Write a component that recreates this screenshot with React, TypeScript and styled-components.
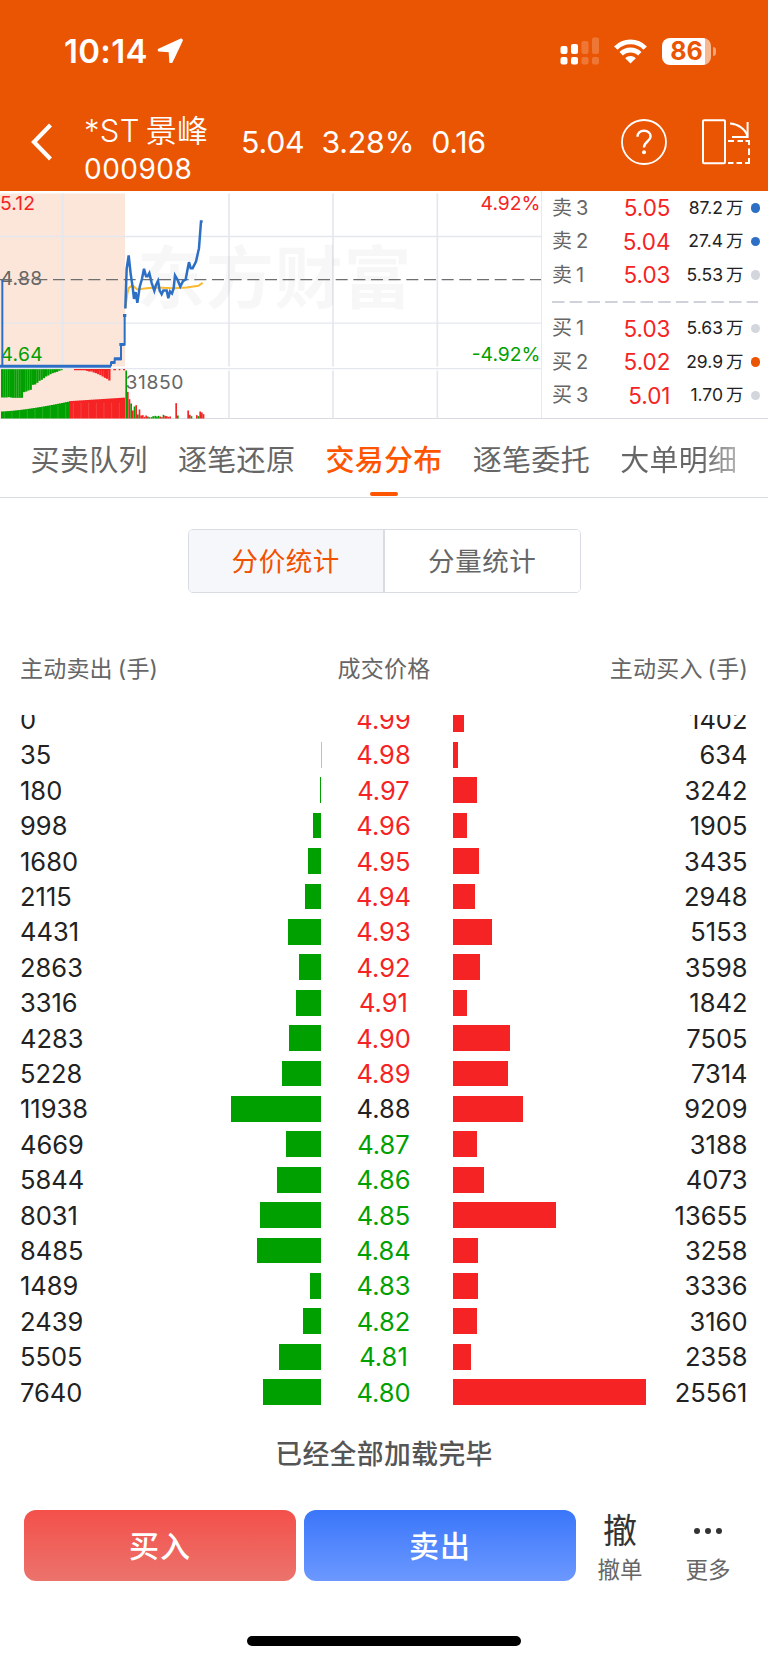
import React from "react";
import styled, { createGlobalStyle } from "styled-components";

const RED = "#f52323";
const GREEN = "#00a000";
const BRAND = "#ea5504";

const GlobalStyle = createGlobalStyle`
  * { box-sizing: border-box; }
  body {
    margin: 0;
    background: #fff;
    font-family: Inter, "Noto Sans CJK SC", sans-serif;
    color: #333;
  }
`;

const Page = styled.div`
  width: 768px;
  height: 1663px;
  overflow: hidden;
  display: flex;
  flex-direction: column;
  background: #fff;
`;

const Header = styled.header`
  height: 190.5px;
  flex: none;
  background: ${BRAND};
  color: #fff;
`;

const StatusBar = styled.div`
  height: 102px;
  padding: 0 52px 0 64px;
  display: flex;
  align-items: center;
`;

const Clock = styled.span`
  font-size: 33px;
  font-weight: 600;
  letter-spacing: 0.3px;
  width: 93px;
  white-space: nowrap;
`;

const StatusIcons = styled.div`
  margin-left: auto;
  display: flex;
  align-items: center;
  gap: 15px;
`;

const Battery = styled.div`
  display: flex;
  align-items: center;
  gap: 2px;
`;

const BatteryBody = styled.div`
  width: 49px;
  height: 27px;
  border-radius: 8px;
  display: flex;
  align-items: center;
  justify-content: center;
  background: linear-gradient(90deg, #fff 43px, #f6b791 43px);
  color: ${BRAND};
  font-size: 25px;
  font-weight: 700;
`;

const BatteryTip = styled.i`
  width: 3px;
  height: 9px;
  border-radius: 0 5px 5px 0;
  background: #f3a276;
`;

const NavBar = styled.div`
  height: 80px;
  padding: 0 18px 0 31px;
  display: flex;
  align-items: center;
`;

const StockTitle = styled.div`
  margin: 14px 0 0 32px;
  width: 157px;
`;

const StockName = styled.div`
  display: flex;
  gap: 6px;
  margin: 1px 0 -1px;
  font-size: 31px;
  line-height: 40px;
  letter-spacing: 0.3px;
  font-weight: 350;
  white-space: nowrap;
`;

const StockCode = styled.div`
  font-size: 28px;
  line-height: 38px;
  letter-spacing: 0.5px;
`;

const Quote = styled.div`
  display: flex;
  gap: 17px;
  font-size: 30.3px;
  letter-spacing: -0.2px;
  white-space: nowrap;
`;

const NavActions = styled.div`
  margin-left: auto;
  display: flex;
  align-items: center;
  gap: 35px;
`;

const MarketPanel = styled.section`
  height: 228.5px;
  flex: none;
  display: flex;
  border-bottom: 1.5px solid #d9dae1;
`;

const OrderBook = styled.div`
  flex: 1;
  border-left: 1px solid #e8e9ef;
  padding: 0.6px 9px 0 10px;
`;

const BookRow = styled.div`
  height: 33.5px;
  display: grid;
  grid-template-columns: 50px 68.5px 73px 1fr;
  align-items: center;
`;

const BookSide = styled.span`
  display: flex;
  align-items: center;
  gap: 4px;
  font-size: 20px;
  line-height: 28px;
  color: #666;
`;

const BookPrice = styled.span`
  font-size: 22.5px;
  text-align: right;
  color: ${RED};
`;

const BookVolume = styled.span`
  display: flex;
  justify-content: flex-end;
  gap: 3px;
  align-items: center;
  font-size: 17.5px;
  line-height: 24px;
  color: #222;
`;

const BookDot = styled.i<{ $color: string }>`
  justify-self: end;
  margin-right: -1px;
  width: 9.5px;
  height: 9.5px;
  border-radius: 50%;
  background: ${(p) => p.$color};
`;

const BookDivider = styled.div`
  height: 20px;
  display: flex;
  align-items: center;
`;

const TabBar = styled.nav`
  height: 79px;
  flex: none;
  padding-left: 30.5px;
  display: flex;
  gap: 30px;
  border-bottom: 1.5px solid #d9dbe3;
`;

const Tab = styled.div<{ $active?: boolean }>`
  width: 117.4px;
  flex: none;
  display: flex;
  flex-direction: column;
  align-items: center;
  padding-top: 20px;
  font-size: 29px;
  line-height: 44px;
  letter-spacing: 0.3px;
  white-space: nowrap;
  font-weight: ${(p) => (p.$active ? 500 : 400)};
  color: ${(p) => (p.$active ? "#ff5500" : "#666")};
`;

const TabMark = styled.i`
  margin-top: 8.5px;
  width: 27.5px;
  height: 4.5px;
  border-radius: 3px;
  background: #ff5500;
`;

const FadedText = styled.span`
  background: linear-gradient(90deg, #666 70%, #b4b4b4 100%);
  background-clip: text;
  -webkit-background-clip: text;
  color: transparent;
`;

const Segmented = styled.div`
  margin: 31px auto 0;
  width: 393px;
  height: 63.5px;
  flex: none;
  display: flex;
  border: 1.5px solid #d9dce2;
  border-radius: 5px;
  overflow: hidden;
`;

const Segment = styled.div<{ $active?: boolean }>`
  flex: 1;
  display: flex;
  align-items: center;
  justify-content: center;
  padding-bottom: 3.5px;
  font-size: 26.5px;
  letter-spacing: 0.6px;
  color: ${(p) => (p.$active ? "#f25100" : "#666")};
  background: ${(p) => (p.$active ? "#f6f7fa" : "#fff")};
  & + & {
    border-left: 2px solid #d9dce2;
  }
`;

const ColumnTitles = styled.div`
  margin-top: 55px;
  height: 38px;
  flex: none;
  padding: 0 20px;
  display: grid;
  grid-template-columns: 1fr auto 1fr;
  align-items: center;
  font-size: 23px;
  letter-spacing: 0.2px;
  color: #666;
  & > :last-child {
    justify-self: end;
  }
`;

const TitleWithUnit = styled.span`
  display: flex;
  gap: 5px;
`;

const PriceList = styled.div`
  margin-top: 29.5px;
  height: 699px;
  flex: none;
  overflow: hidden;
`;

const PriceRows = styled.div`
  margin-top: -13.3px;
`;

const PriceRow = styled.div`
  height: 35.41px;
  padding: 0 20.5px 0 20px;
  display: grid;
  grid-template-columns: 101px 200px 132px 194px 100.5px;
  align-items: center;
  font-size: 25.5px;
  line-height: 35px;
  letter-spacing: 0;
  color: #222;
`;

const Price = styled.span<{ $color: string }>`
  text-align: center;
  padding-right: 7px;
  color: ${(p) => p.$color};
`;

const BuyVolume = styled.span`
  text-align: right;
`;

const Bar = styled.i<{ $buy?: boolean }>`
  height: 25.7px;
  justify-self: ${(p) => (p.$buy ? "start" : "end")};
  background: ${(p) => (p.$buy ? RED : GREEN)};
`;

const LoadedNote = styled.div`
  height: 68px;
  margin-top: 4px;
  flex: none;
  display: flex;
  align-items: center;
  justify-content: center;
  font-size: 26.8px;
  letter-spacing: 0.4px;
  font-weight: 500;
  color: #555;
`;

const ActionBar = styled.div`
  margin-top: 23.5px;
  padding-left: 24px;
  height: 71px;
  flex: none;
  display: flex;
`;

const TradeButton = styled.div<{ $from: string; $to: string }>`
  width: 272px;
  height: 71px;
  margin-right: 8px;
  padding-bottom: 3px;
  border-radius: 12px;
  display: flex;
  align-items: center;
  justify-content: center;
  color: #fff;
  font-size: 30px;
  font-weight: 500;
  letter-spacing: 1px;
  background: linear-gradient(180deg, ${(p) => p.$from}, ${(p) => p.$to});
`;

const SmallAction = styled.div`
  width: 88px;
  margin-left: -8px;
  margin-right: 8px;
  display: flex;
  flex-direction: column;
  align-items: center;
  gap: 3.5px;
  font-size: 22.5px;
  line-height: 30px;
  color: #666;
`;

const ActionGlyph = styled.span`
  height: 42px;
  flex: none;
  display: flex;
  align-items: center;
  font-size: 34px;
  color: #333;
`;

const HomeIndicator = styled.div`
  width: 273.5px;
  height: 10px;
  border-radius: 5px;
  margin: 55px auto 0;
  background: #000;
`;

const orders = {
  sell: [
    ["卖", "3", "5.05", "87.2", "#2c6fc4"],
    ["卖", "2", "5.04", "27.4", "#2c6fc4"],
    ["卖", "1", "5.03", "5.53", "#d3d6dc"],
  ],
  buy: [
    ["买", "1", "5.03", "5.63", "#d3d6dc"],
    ["买", "2", "5.02", "29.9", BRAND],
    ["买", "3", "5.01", "1.70", "#d3d6dc"],
  ],
};

const trades: [number, string, number][] = [
  [0, "4.99", 1402],
  [35, "4.98", 634],
  [180, "4.97", 3242],
  [998, "4.96", 1905],
  [1680, "4.95", 3435],
  [2115, "4.94", 2948],
  [4431, "4.93", 5153],
  [2863, "4.92", 3598],
  [3316, "4.91", 1842],
  [4283, "4.90", 7505],
  [5228, "4.89", 7314],
  [11938, "4.88", 9209],
  [4669, "4.87", 3188],
  [5844, "4.86", 4073],
  [8031, "4.85", 13655],
  [8485, "4.84", 3258],
  [1489, "4.83", 3336],
  [2439, "4.82", 3160],
  [5505, "4.81", 2358],
  [7640, "4.80", 25561],
];

const PREV_CLOSE = 4.88;
const PX_PER_LOT = 193 / 25561;

const barStyle = (lots: number) => ({
  width: lots * PX_PER_LOT,
  opacity: Math.min(1, lots * PX_PER_LOT * 1.5),
});

const priceColor = (p: string) =>
  Number(p) > PREV_CLOSE ? RED : Number(p) < PREV_CLOSE ? GREEN : "#222";

const auctionTop = [
  636, 636, 636, 635, 636, 637, 637, 637, 637, 637, 620, 618, 615, 613, 598, 597, 592, 586, 583,
  578, 573, 570, 566, 563, 561, 559, 556, 554,
];
const auctionRed = [553, 556, 558, 558, 561, 563, 566, 569, 573, 577, 580, 585];
const auctionVolume = Array.from({ length: 62 }, (_, i) => {
  const x = 3 + i * 6;
  const y = x < 205 ? 678 - Math.pow(x / 205, 1.45) * 30 : 647 - ((x - 205) / 170) * 11;
  return { x, y, color: x < 207 ? GREEN : RED };
});
const intradayVolume: [number, number, string][] = [
  [376, 555, GREEN], [381, 619, RED], [386, 641, RED], [391, 654, GREEN], [396, 675, RED],
  [401, 663, GREEN], [406, 659, RED], [411, 687, GREEN], [416, 672, RED], [421, 690, RED],
  [426, 689, RED], [431, 694, RED], [436, 690, RED], [441, 693, GREEN], [446, 695, RED],
  [452, 695, GREEN], [457, 692, GREEN], [463, 691, GREEN], [468, 693, GREEN], [473, 691, GREEN],
  [478, 693, RED], [483, 695, RED], [488, 688, GREEN], [493, 691, RED], [498, 692, RED],
  [503, 694, RED], [508, 693, RED], [526, 653, RED], [531, 690, GREEN], [562, 675, RED],
  [567, 688, RED], [572, 692, GREEN], [588, 689, RED], [593, 692, GREEN], [598, 678, RED],
  [603, 681, RED], [608, 686, RED],
];

const ChartSvg = styled.svg`
  flex: none;
`;

function TrendChart() {
  return (
    <ChartSvg width="541" height="228" viewBox="0 0 541 228" fontFamily="Inter">
      <g transform="translate(0 -5.5) scale(0.33333)">
        <rect x="0" y="24" width="375" height="519" fill="#fce6da" />
        <rect x="0" y="551" width="375" height="148" fill="#fce6da" />
        <g stroke="#e4e7ed" strokeWidth="5">
          <path d="M188 24V543M687 24V543M687 555V699M999 24V543M999 555V699M1312 24V543M1312 555V699" />
          <path d="M0 153H1623M0 413H1623" strokeWidth="4" />
          <path d="M0 549.5H1623" strokeWidth="4" />
        </g>
      </g>
      <text
        x="137"
        y="112"
        fontFamily="Noto Sans CJK SC"
        fontWeight="700"
        fontSize="68"
        letterSpacing="0.8"
        fill="#000"
        fillOpacity="0.032"
      >
        东方财富
      </text>
      <g fontSize="19.3">
        <text x="0" y="18.8" fill={RED} letterSpacing="0.1">5.12</text>
        <text x="540.5" y="18.8" textAnchor="end" fill={RED}>4.92%</text>
        <text x="0.5" y="94.3" fill="#666" letterSpacing="0.3">4.88</text>
        <text x="0.5" y="169.8" fill={GREEN} letterSpacing="0.3">4.64</text>
        <text x="540.5" y="169.8" textAnchor="end" fill={GREEN}>-4.92%</text>
        <text x="125.5" y="198" fill="#666" letterSpacing="0.6">31850</text>
      </g>
      <g transform="translate(0 -5.5) scale(0.33333)" fill="none">
        <path d="M0 282.5H1623" stroke="#6e6e6e" strokeWidth="4" strokeDasharray="36 17" />
        <path
          d="M376 368L382 325L386 308L392 303L400 302L412 312L440 308L470 306L520 308L560 306L595 301L608 292"
          stroke="#fbb92f"
          strokeWidth="6"
        />
        <path d="M7 283V542" stroke="#2c6fc4" strokeWidth="6" />
        <path d="M0 542H333" stroke="#2c6fc4" strokeWidth="9" />
        <path d="M333 542V532H344V521H363V477H374V390" stroke="#2c6fc4" strokeWidth="6" />
        <path d="M332 531H344M342 520H363M358 477H374M369 390H379" stroke="#2c6fc4" strokeWidth="9" />
        <path
          d="M376 369L380 250L386 210L392 265L398 305L402 340L407 320L412 352L419 305L426 280L432 250L438 272L443 272L448 263L455 292L463 316L468 298L474 286L479 315L485 326L490 315H500L505 338L510 318L516 324L521 308L525 270L533 284L541 303L549 287L557 282L563 250L567 230L572 248H578L588 228L597 188L603 108H608"
          stroke="#2c6fc4"
          strokeWidth="7.5"
        />
      </g>
      <g transform="translate(0 -5.5) scale(0.33333)">
        {auctionTop.map((y, i) => (
          <rect key={i} x={3 + i * 6.6} y="551" width="6.8" height={y - 551} fill={GREEN} />
        ))}
        {auctionRed.map((y, i) => (
          <rect key={i} x={251 + i * 6.7} y="551" width="6.8" height={y - 551} fill={RED} />
        ))}
        <path d="M222 552.5H331M340 552.5H348M356 552.5H361M369 552.5H375" stroke={RED} strokeWidth="4" />
        {auctionVolume.map((b) => (
          <rect key={b.x} x={b.x} y={b.y} width="6.3" height={699 - b.y} fill={b.color} />
        ))}
        <path
          d={Array.from({ length: 16 }, (_, i) => `M${13 + i * 23} 699V${i < 9 ? 680 - i * 3 : 652}`).join("")}
          stroke="#fff"
          strokeOpacity="0.3"
          strokeWidth="1.5"
        />
        {intradayVolume.map(([x, y, c]) => (
          <rect key={x} x={x} y={y} width="5" height={699 - y} fill={c} />
        ))}
      </g>
    </ChartSvg>
  );
}

function BookLine({ row }: { row: string[] }) {
  const [side, level, price, volume, dot] = row;
  return (
    <BookRow>
      <BookSide>
        <span>{side}</span>
        <span>{level}</span>
      </BookSide>
      <BookPrice>{price}</BookPrice>
      <BookVolume>
        <span>{volume}</span>
        <span>万</span>
      </BookVolume>
      <BookDot $color={dot} />
    </BookRow>
  );
}

export default function App() {
  return (
    <Page>
      <GlobalStyle />
      <Header>
        <StatusBar>
          <Clock>10:14</Clock>
          <svg width="27" height="26" viewBox="0 0 27 26">
            <path
              d="M24.2 1.5L1.8 11.6L1.8 12.6L12.6 13.2L13.3 24.1L14.6 24.1L24.9 2.2Z"
              fill="#fff"
              stroke="#fff"
              strokeWidth="2"
              strokeLinejoin="round"
            />
          </svg>
          <StatusIcons>
            <svg width="39" height="28" viewBox="0 0 39 28" fill="#fff">
              <rect x="0.5" y="9" width="7" height="8" rx="2" />
              <rect x="11" y="7" width="7" height="10" rx="2" />
              <rect x="0.5" y="20" width="7" height="7.5" rx="2" />
              <rect x="11" y="20" width="7" height="7.5" rx="2" />
              <g opacity="0.2">
                <rect x="21.5" y="4" width="7" height="13" rx="2" />
                <rect x="32" y="0.5" width="7" height="16.5" rx="2" />
                <rect x="21.5" y="20" width="7" height="7.5" rx="2" />
                <rect x="32" y="20" width="7" height="7.5" rx="2" />
              </g>
            </svg>
            <svg width="33" height="25" viewBox="0 0 33 25" fill="none" stroke="#fff" strokeWidth="4.8">
              <path d="M1.8 9.2C9.8 0.8 23.2 0.8 31.2 9.2" />
              <path d="M7.2 14.8C12.2 9.7 20.8 9.7 25.8 14.8" />
              <path d="M16.5 24.6L11.2 19.2C14.2 16.4 18.8 16.4 21.8 19.2Z" fill="#fff" stroke="none" />
            </svg>
            <Battery>
              <BatteryBody>86</BatteryBody>
              <BatteryTip />
            </Battery>
          </StatusIcons>
        </StatusBar>
        <NavBar>
          <svg width="21" height="38" viewBox="0 0 21 38">
            <path d="M19.5 2L3 19L19.5 36" fill="none" stroke="#fff" strokeWidth="4.2" />
          </svg>
          <StockTitle>
            <StockName>
              <span>*ST</span>
              <span>景峰</span>
            </StockName>
            <StockCode>000908</StockCode>
          </StockTitle>
          <Quote>
            <span>5.04</span>
            <span>3.28%</span>
            <span>0.16</span>
          </Quote>
          <NavActions>
            <svg width="46" height="46" viewBox="0 0 46 46" fill="none" stroke="#fff">
              <circle cx="23" cy="23" r="22" strokeWidth="1.8" />
              <path
                d="M16.5 17.8C16.5 14 19.2 11.8 23 11.8C26.8 11.8 29.6 14.1 29.6 17.6C29.6 22.4 23 22.2 23 28.6"
                strokeWidth="2.4"
              />
              <circle cx="23" cy="33.2" r="2" fill="#fff" stroke="none" />
            </svg>
            <svg width="48" height="46" viewBox="0 0 48 46" fill="none" stroke="#fff" strokeWidth="2">
              <rect x="1" y="1.3" width="22" height="43" rx="1" />
              <path d="M28 4.6C36 5 43.5 10 45.3 17" />
              <path d="M45.6 3V18H30" />
              <path d="M26 22H32M35.5 22H41M43.5 22H47V26M47 29.5V36M47 39V44H43M40 44H34.5M31.5 44H26" />
            </svg>
          </NavActions>
        </NavBar>
      </Header>

      <MarketPanel>
        <TrendChart />
        <OrderBook>
          {orders.sell.map((r) => (
            <BookLine key={r[0] + r[1]} row={r} />
          ))}
          <BookDivider>
            <svg width="206" height="2" viewBox="0 0 206 2">
              <path d="M0 1H206" stroke="#cfd2db" strokeWidth="2" strokeDasharray="12.5 5.2" />
            </svg>
          </BookDivider>
          {orders.buy.map((r) => (
            <BookLine key={r[0] + r[1]} row={r} />
          ))}
        </OrderBook>
      </MarketPanel>

      <TabBar>
        <Tab>买卖队列</Tab>
        <Tab>逐笔还原</Tab>
        <Tab $active>
          交易分布
          <TabMark />
        </Tab>
        <Tab>逐笔委托</Tab>
        <Tab>
          <FadedText>大单明细</FadedText>
        </Tab>
      </TabBar>

      <Segmented>
        <Segment $active>分价统计</Segment>
        <Segment>分量统计</Segment>
      </Segmented>

      <ColumnTitles>
        <TitleWithUnit>
          <span>主动卖出</span>
          <span>(手)</span>
        </TitleWithUnit>
        <span>成交价格</span>
        <TitleWithUnit>
          <span>主动买入</span>
          <span>(手)</span>
        </TitleWithUnit>
      </ColumnTitles>

      <PriceList>
        <PriceRows>
          {trades.map(([sell, price, buy]) => (
            <PriceRow key={price}>
              <span>{sell}</span>
              <Bar style={barStyle(sell)} />
              <Price $color={priceColor(price)}>{price}</Price>
              <Bar $buy style={barStyle(buy)} />
              <BuyVolume>{buy}</BuyVolume>
            </PriceRow>
          ))}
        </PriceRows>
      </PriceList>

      <LoadedNote>已经全部加载完毕</LoadedNote>

      <ActionBar>
        <TradeButton $from="#f4504a" $to="#ec736d">
          买入
        </TradeButton>
        <TradeButton $from="#3a76fa" $to="#6c98ff">
          卖出
        </TradeButton>
        <SmallAction>
          <ActionGlyph>撤</ActionGlyph>
          撤单
        </SmallAction>
        <SmallAction>
          <ActionGlyph>
            <svg width="30" height="8" viewBox="0 0 30 8" fill="#333">
              <circle cx="4" cy="4" r="3" />
              <circle cx="15" cy="4" r="3" />
              <circle cx="26" cy="4" r="3" />
            </svg>
          </ActionGlyph>
          更多
        </SmallAction>
      </ActionBar>
      <HomeIndicator />
    </Page>
  );
}
